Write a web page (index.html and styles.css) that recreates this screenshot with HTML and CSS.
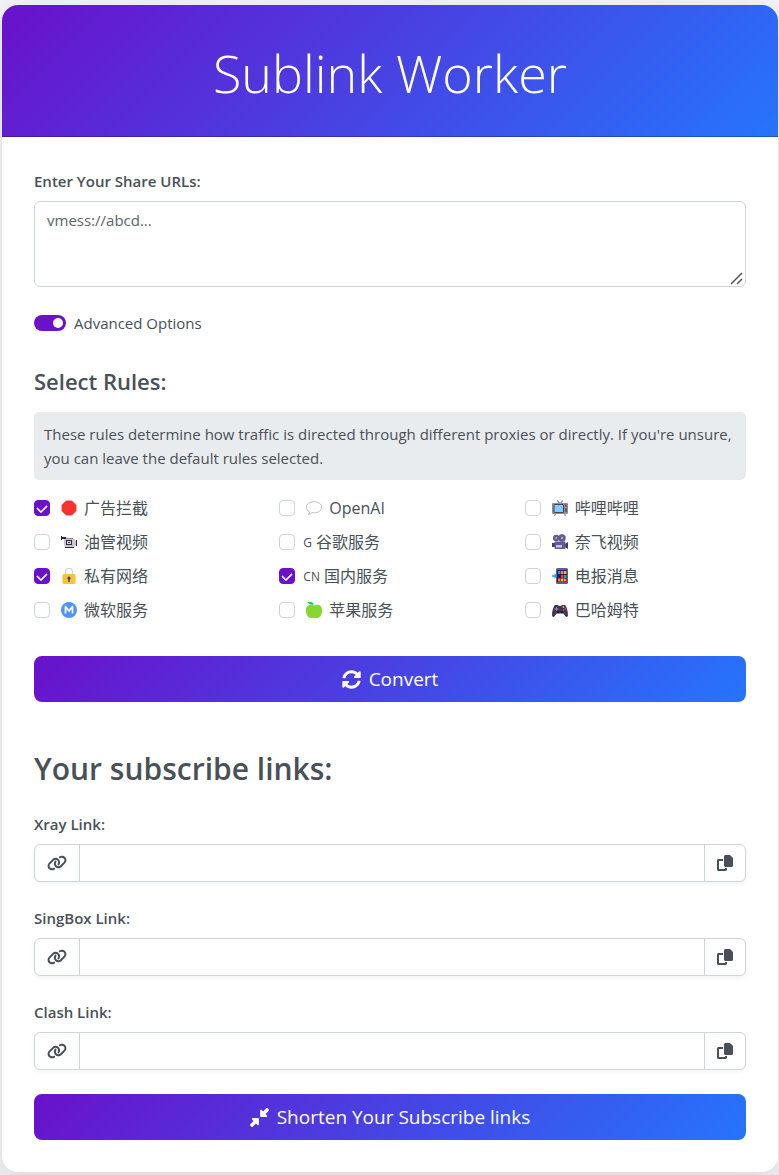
FILE: index.html
```html
<!DOCTYPE html>
<html lang="en">
<head>
<meta charset="UTF-8">
<meta name="viewport" content="width=device-width, initial-scale=1">
<title>Sublink Worker</title>
<link rel="stylesheet" href="styles.css">
</head>
<body>
<svg class="sprite" aria-hidden="true">
  <symbol id="i-link" viewBox="0 0 640 512"><path d="M579.8 267.7c56.5-56.5 56.5-148 0-204.5c-50-50-128.8-56.5-186.3-15.4l-1.6 1.1c-14.4 10.3-17.7 30.3-7.4 44.6s30.3 17.7 44.6 7.4l1.6-1.1c32.1-22.9 76-19.3 103.8 8.6c31.5 31.5 31.5 82.5 0 114L422.3 334.8c-31.5 31.5-82.5 31.5-114 0c-27.9-27.9-31.5-71.8-8.6-103.8l1.1-1.6c10.3-14.4 6.9-34.4-7.4-44.6s-34.4-6.9-44.6 7.4l-1.1 1.6C206.5 251.2 213 330 263 380c56.5 56.5 148 56.5 204.5 0L579.8 267.7zM60.2 244.3c-56.5 56.5-56.5 148 0 204.5c50 50 128.8 56.5 186.3 15.4l1.6-1.1c14.4-10.3 17.7-30.3 7.4-44.6s-30.3-17.7-44.6-7.4l-1.6 1.1c-32.1 22.9-76 19.3-103.8-8.6C74 372 74 321 105.5 289.5L217.7 177.2c31.5-31.5 82.5-31.5 114 0c27.9 27.9 31.5 71.8 8.6 103.9l-1.1 1.6c-10.3 14.4-6.9 34.4 7.4 44.6s34.4 6.9 44.6-7.4l1.1-1.6C433.5 260.8 427 182 377 132c-56.5-56.5-148-56.5-204.5 0L60.2 244.3z"/></symbol>
  <symbol id="i-copy" viewBox="0 0 512 512"><path d="M272 0H396.1c12.7 0 24.9 5.1 33.9 14.1l67.9 67.9c9 9 14.1 21.2 14.1 33.9V336c0 26.5-21.5 48-48 48H272c-26.5 0-48-21.5-48-48V48c0-26.5 21.5-48 48-48zM48 128H192v64H64V448H256V416h64v48c0 26.5-21.5 48-48 48H48c-26.5 0-48-21.5-48-48V176c0-26.5 21.5-48 48-48z"/></symbol>
  <symbol id="i-sync" viewBox="0 0 512 512"><path d="M370.72 133.28C339.458 104.008 298.888 87.962 255.848 88c-77.458.068-144.328 53.178-162.791 126.85-1.344 5.363-6.122 9.15-11.651 9.15H24.103c-7.498 0-13.194-6.807-11.807-14.176C33.933 94.924 134.813 8 256 8c66.448 0 126.791 26.136 171.315 68.685L463.03 40.97C478.149 25.851 504 36.559 504 57.941V192c0 13.255-10.745 24-24 24H345.941c-21.382 0-32.09-25.851-16.971-40.971l41.75-41.749zM32 296h134.059c21.382 0 32.09 25.851 16.971 40.971l-41.75 41.75c31.262 29.273 71.835 45.319 114.876 45.28 77.418-.07 144.315-53.144 162.787-126.849 1.344-5.363 6.122-9.15 11.651-9.15h57.304c7.498 0 13.194 6.807 11.807 14.176C478.067 417.076 377.187 504 256 504c-66.448 0-126.791-26.136-171.315-68.685L48.97 471.03C33.851 486.149 8 475.441 8 454.059V320c0-13.255 10.745-24 24-24z"/></symbol>
  <symbol id="i-compress" viewBox="0 0 512 512"><path d="M439 7c9.4-9.4 24.6-9.4 33.9 0l32 32c9.4 9.4 9.4 24.6 0 33.9l-87 87 39 39c6.9 6.9 8.9 17.2 5.2 26.2s-12.5 14.8-22.2 14.8H296c-13.3 0-24-10.7-24-24V72c0-9.7 5.8-18.5 14.8-22.2s19.3-1.7 26.2 5.2l39 39L439 7zM72 272H216c13.3 0 24 10.7 24 24V440c0 9.7-5.8 18.5-14.8 22.2s-19.3 1.7-26.2-5.2l-39-39L73 505c-9.4 9.4-24.6 9.4-33.9 0L7 473c-9.4-9.4-9.4-24.6 0-33.9l87-87L55 313c-6.9-6.9-8.9-17.2-5.2-26.2s12.5-14.8 22.2-14.8z"/></symbol>
</svg>

<main class="card">
  <header class="card-header"><h1>Sublink Worker</h1></header>
  <div class="card-body">
    <form class="convert-form">
      <label class="field-label" for="urls">Enter Your Share URLs:</label>
      <textarea class="urls" id="urls" rows="3" placeholder="vmess://abcd..."></textarea>

      <div class="switch-row">
        <input class="switch" type="checkbox" role="switch" id="advanced" checked>
        <label for="advanced">Advanced Options</label>
      </div>

      <h2 class="rules-title">Select Rules:</h2>
      <p class="hint">These rules determine how traffic is directed through different proxies or directly. If you're unsure, you can leave the default rules selected.</p>

      <div class="rules">
        <div class="rule"><input class="check" type="checkbox" id="r1" checked><label for="r1"><svg class="emoji" viewBox="0 0 16 16"><path d="M5 .5h6L15.500 5v6L11 15.500H5L.5 11V5z" fill="#fa312f" stroke="#d5c6c6" stroke-width=".6"/></svg>广告拦截</label></div>
        <div class="rule"><input class="check" type="checkbox" id="r2"><label for="r2"><svg class="emoji" viewBox="0 0 16 16"><path d="M0 3h5v2H0z" fill="#322147"/><path d="M0 2h1v4H0zM15 6h1v6h-1z" fill="#322147"/><path d="M3 5h10l2 2v4l-2 2H4l-1-2z" fill="#c9c6cc"/><path d="M5 4h7v1H5z" fill="#8b8592"/><path d="M5 6h6v5H5z" fill="#372448"/><path d="M6 7h4v3H6z" fill="#d7d2db"/><path d="M7 8h2v1H7z" fill="#372448"/><path d="M4 13h9v1H4z" fill="#372448"/></svg>油管视频</label></div>
        <div class="rule"><input class="check" type="checkbox" id="r3" checked><label for="r3"><svg class="emoji" viewBox="0 0 16 16"><path d="M4.500 7V4a3.500 3.500 0 0 1 7 0v3" fill="none" stroke="#d3d3d3" stroke-width="1.200"/><rect x="1.500" y="6" width="13" height="10" rx="1.500" fill="#f9c23c"/><circle cx="8" cy="10" r="1.600" fill="#433b6b"/><path d="M7.300 10h1.400v4H7.300z" fill="#433b6b"/></svg>私有网络</label></div>
        <div class="rule"><input class="check" type="checkbox" id="r4"><label for="r4"><svg class="emoji" viewBox="0 0 16 16"><circle cx="8" cy="8" r="8" fill="#5092ff"/><path d="M4.500 11.500v-7L8 9l3.500-4.500v7" fill="none" stroke="#fff" stroke-width="1.700" stroke-linejoin="round"/></svg>微软服务</label></div>
        <div class="rule"><input class="check" type="checkbox" id="r5"><label for="r5"><svg class="emoji" viewBox="0 0 16 16"><path d="M3.500 12C-1 9.500-.5 4 4 2.500 9 .5 15.500 2.500 15.700 7c0 4.500-5.500 6.500-9.700 5.500-.8 1.500-2.300 2-3.800 1.800.8-.6 1.300-1.300 1.300-2.300z" fill="#fff" stroke="#b8b8b8" stroke-width=".9"/></svg>OpenAI</label></div>
        <div class="rule"><input class="check" type="checkbox" id="r6"><label for="r6"><small class="mark">G</small>谷歌服务</label></div>
        <div class="rule"><input class="check" type="checkbox" id="r7" checked><label for="r7"><small class="mark">CN</small>国内服务</label></div>
        <div class="rule"><input class="check" type="checkbox" id="r8"><label for="r8"><svg class="emoji" viewBox="0 0 16 16"><path d="M8 3.500c4-1.500 8-.5 8 5 0 4-2 7.500-5 7.500H5c-3 0-5-3.500-5-7.500 0-5.500 4-6.500 8-5z" fill="#86d72f"/><path d="M1.500 0c3-.3 5.500 0 6.500 2.500C5 3 2.500 2 1.500 0z" fill="#00d26a"/></svg>苹果服务</label></div>
        <div class="rule"><input class="check" type="checkbox" id="r9"><label for="r9"><svg class="emoji" viewBox="0 0 16 16"><path d="m5 0 3 3.500L11 .5M4 13l-1.500 3M12 13l1.500 3" fill="none" stroke="#9b9b9b" stroke-width="1.200"/><rect y="3" width="16" height="11" rx="1" fill="#8d9096"/><rect x="2" y="4.500" width="9.500" height="8" rx=".5" fill="#83cbff" stroke="#46455e"/><circle cx="14" cy="5.500" r=".9" fill="#ca0b4a"/><path d="M13 8h2v4h-2z" fill="#636363"/></svg>哔哩哔哩</label></div>
        <div class="rule"><input class="check" type="checkbox" id="r10"><label for="r10"><svg class="emoji" viewBox="0 0 16 16"><path d="M13 10l3-2v7l-3-2zM0 9h3v4H0z" fill="#433b6b"/><circle cx="4.200" cy="4" r="3.200" fill="#635994"/><circle cx="10" cy="4" r="3.700" fill="#635994"/><circle cx="4.200" cy="4" r="1" fill="#b4acbc"/><circle cx="10" cy="4" r="1.200" fill="#b4acbc"/><rect x="2.500" y="7.500" width="11" height="7.500" rx="1" fill="#635994"/><path d="M4 11h6v2.500H4z" fill="#cdc4d6"/></svg>奈飞视频</label></div>
        <div class="rule"><input class="check" type="checkbox" id="r11"><label for="r11"><svg class="emoji" viewBox="0 0 16 16"><rect x="4" width="12" height="16" rx="1.500" fill="#635994"/><path d="M5 2h10v12H5z" fill="#321b41"/><path d="M6 3h2.500v3H6zM12 7h2.500v3H12z" fill="#00a6ed"/><path d="M9 3h2.500v3H9zM12 10.500h2.500v3H12zM6 10.500h2.500v3H6z" fill="#ff822d"/><path d="M12 3h2.500v3H12zM9 10.500h2.500v3H9z" fill="#f4b52b"/><path d="M9 7h2.500v3H9z" fill="#f8312f"/><path d="M0 7.300h2.500V5.500L5.500 8l-3 2.500V8.700H0z" fill="#00a6ed"/></svg>电报消息</label></div>
        <div class="rule"><input class="check" type="checkbox" id="r12"><label for="r12"><svg class="emoji" viewBox="0 0 16 16"><path d="M3 3h3l1 1h2l1-1h3c1.500 1 3.500 8 2.800 11-.8 1.800-2.500 1-4.300-2.500h-7C2.700 15 1 15.800.2 14-.5 11 1.500 4 3 3z" fill="#46305a"/><path d="M4.500 5v4M2.500 7h4" stroke="#998ea4"/><circle cx="11.500" cy="5" r=".9" fill="#f9c23c"/><circle cx="13.300" cy="7" r=".9" fill="#f8312f"/><circle cx="11.500" cy="8.500" r=".9" fill="#00a76a"/><circle cx="6" cy="10" r="1.300" fill="#1c1c1c"/><circle cx="10" cy="10" r="1.300" fill="#1c1c1c"/></svg>巴哈姆特</label></div>
      </div>

      <button class="action" type="submit"><svg class="icon" aria-hidden="true"><use href="#i-sync"/></svg>Convert</button>
    </form>

    <section class="links">
      <h2 class="links-title">Your subscribe links:</h2>

      <div class="link-field">
        <label class="field-label" for="xray">Xray Link:</label>
        <div class="input-group">
          <span class="addon"><svg class="icon-link" aria-hidden="true"><use href="#i-link"/></svg></span>
          <input class="link-input" id="xray" type="text" readonly>
          <button class="copy" type="button" aria-label="Copy Xray link"><svg class="icon-copy" aria-hidden="true"><use href="#i-copy"/></svg></button>
        </div>
      </div>

      <div class="link-field">
        <label class="field-label" for="singbox">SingBox Link:</label>
        <div class="input-group">
          <span class="addon"><svg class="icon-link" aria-hidden="true"><use href="#i-link"/></svg></span>
          <input class="link-input" id="singbox" type="text" readonly>
          <button class="copy" type="button" aria-label="Copy SingBox link"><svg class="icon-copy" aria-hidden="true"><use href="#i-copy"/></svg></button>
        </div>
      </div>

      <div class="link-field">
        <label class="field-label" for="clash">Clash Link:</label>
        <div class="input-group">
          <span class="addon"><svg class="icon-link" aria-hidden="true"><use href="#i-link"/></svg></span>
          <input class="link-input" id="clash" type="text" readonly>
          <button class="copy" type="button" aria-label="Copy Clash link"><svg class="icon-copy" aria-hidden="true"><use href="#i-copy"/></svg></button>
        </div>
      </div>

      <button class="action" type="button"><svg class="icon" aria-hidden="true"><use href="#i-compress"/></svg>Shorten Your Subscribe links</button>
    </section>
  </div>
</main>
</body>
</html>
```
FILE: styles.css
```css
:root {
  --purple: #6a11cb;
  --blue: #2575fc;
  --text: #495057;
  --border: #ced4da;
}

* { box-sizing: border-box; }

body {
  margin: 0;
  padding: 5px 1px 3px 2px;
  background: #f0f2f5;
  color: var(--text);
  font-family: "Open Sans", "Noto Sans CJK SC", sans-serif;
  font-size: 15px;
  line-height: 24px;
}

h1, h2, p { margin: 0; }

button, input, textarea { font: inherit; color: inherit; }

.sprite { display: none; }

.card {
  overflow: hidden;
  border-radius: 16px;
  background: #fff;
  box-shadow: 0 10px 30px rgba(0, 0, 0, .1);
}

.card-header {
  padding: 34px 32px 30px;
  border-bottom: 1px solid rgba(0, 0, 0, .25);
  background: linear-gradient(135deg, var(--purple), var(--blue)) border-box;
  color: #fff;
  text-align: center;
}

.card-header h1 {
  font-size: 52px;
  font-weight: 300;
  line-height: 67px;
}

.card-body { padding: 32px; }

.field-label {
  display: block;
  margin-bottom: 8px;
  font-weight: 600;
}

.urls {
  display: block;
  width: 100%;
  padding: 6px 12px;
  border: 1px solid var(--border);
  border-radius: 6px;
  background: #fff;
  resize: vertical;
}

.urls::placeholder { color: #5c636a; opacity: 1; }

.urls::-webkit-resizer {
  background: url("data:image/svg+xml,%3Csvg xmlns='http://www.w3.org/2000/svg' viewBox='0 0 15 15'%3E%3Cpath d='M1 13L12 2M7 13l5-5' stroke='%23555' stroke-width='1.500'/%3E%3C/svg%3E") no-repeat center;
}

.switch-row {
  display: flex;
  align-items: center;
  gap: 8px;
  margin-top: 24px;
}

.switch {
  display: flex;
  justify-content: flex-end;
  align-items: center;
  width: 32px;
  height: 16px;
  margin: 0;
  padding: 0 3px;
  border-radius: 8px;
  background: var(--purple);
  appearance: none;
}

.switch:not(:checked) {
  justify-content: flex-start;
  background: var(--border);
}

.switch::before {
  content: "";
  width: 10px;
  height: 10px;
  border-radius: 50%;
  background: #fff;
}

.rules-title {
  margin: 32px 0 16px;
  font-size: 22px;
  font-weight: 600;
  line-height: 29px;
}

.hint {
  padding: 10px;
  border-radius: 5px;
  background: #e9ecef;
}

.rules {
  display: grid;
  grid-template-columns: repeat(3, 1fr);
  grid-template-rows: repeat(4, auto);
  grid-auto-flow: column;
  gap: 10px 24px;
  margin: 16px 0 34px;
}

.rule, .rule label {
  display: flex;
  align-items: center;
}

.rule { gap: 8px; }

.rule label { font-size: 16px; }

.check {
  display: grid;
  place-items: center;
  flex: none;
  width: 16px;
  height: 16px;
  margin: 0;
  border: 1px solid var(--border);
  border-radius: 4px;
  background: #fff;
  appearance: none;
}

.check:checked {
  border-color: var(--purple);
  background: var(--purple);
}

.check:checked::before {
  content: "";
  width: 8px;
  height: 5px;
  margin-bottom: 2px;
  border: solid #fff;
  border-width: 0 0 2px 2px;
  border-radius: 1px;
  transform: rotate(-45deg);
}

.emoji {
  width: 16px;
  height: 16px;
  margin: 0 7px 0 3px;
}

.mark {
  margin-right: 4px;
  padding-top: 2px;
  font-size: 12px;
  line-height: 20px;
}

.action {
  display: flex;
  justify-content: center;
  align-items: center;
  gap: 8px;
  width: 100%;
  padding: 8px 16px;
  border: 0;
  border-radius: 8px;
  background: linear-gradient(135deg, var(--purple), var(--blue));
  color: #fff;
  font-size: 19px;
  line-height: 30px;
}

.icon {
  width: 19px;
  height: 19px;
  fill: currentColor;
}

.links-title {
  margin: 48px 0 24px;
  font-size: 30px;
  font-weight: 600;
  line-height: 38px;
}

.link-field { margin-bottom: 24px; }

.input-group {
  display: flex;
  height: 38px;
  overflow: hidden;
  border: 1px solid var(--border);
  border-radius: 6px;
  background: #fff;
  box-shadow: 0 2px 4px rgba(0, 0, 0, .05);
}

.addon, .copy {
  display: flex;
  align-items: center;
  padding: 0 12px;
}

.link-input {
  flex: 1;
  min-width: 0;
  padding: 0 12px;
  border: solid var(--border);
  border-width: 0 1px;
  background: none;
}

.copy {
  border: 0;
  background: none;
}

.icon-link {
  width: 20px;
  height: 16px;
  fill: currentColor;
}

.icon-copy {
  width: 16px;
  height: 16px;
  fill: currentColor;
}
```
